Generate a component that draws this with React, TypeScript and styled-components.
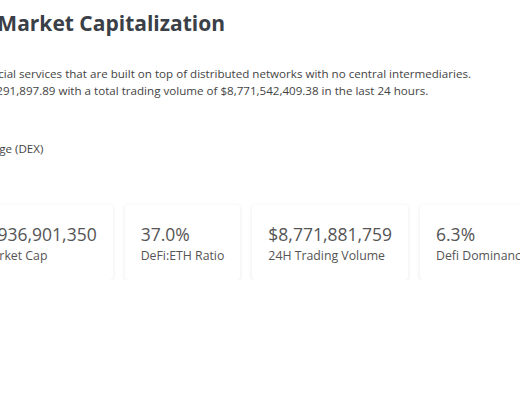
import styled, { createGlobalStyle } from "styled-components";

const GlobalStyle = createGlobalStyle`
  html, body {
    margin: 0;
    padding: 0;
    background: #ffffff;
    overflow: hidden;
  }
  body {
    font-family: "Open Sans", "Noto Sans", "Liberation Sans", sans-serif;
  }
`;

const stats = [
  { value: "$191,936,901,350", label: "DeFi Market Cap" },
  { value: "37.0%", label: "DeFi:ETH Ratio" },
  { value: "$8,771,881,759", label: "24H Trading Volume" },
  { value: "6.3%", label: "Defi Dominance" },
  { value: "Uniswap", label: "Top Coin" },
];

export default function App() {
  return (
    <>
      <GlobalStyle />
      <Page>
        <Title>DeFi Market Capitalization</Title>
        <Intro>
          <Line>
            (DeFi) financial services that are built on top of distributed networks with no central
            intermediaries.
          </Line>
          <Line>
            at $91,936,291,897.89 with a total trading volume of $8,771,542,409.38 in the last 24
            hours.
          </Line>
        </Intro>
        <Filter>Top Exchange (DEX)</Filter>
        <Cards>
          {stats.map((s) => (
            <Card key={s.label}>
              <Value>{s.value}</Value>
              <Label>{s.label}</Label>
            </Card>
          ))}
        </Cards>
      </Page>
    </>
  );
}

const Page = styled.main`
  display: flex;
  flex-direction: column;
  width: 1100px;
  margin-left: -63px;
  padding-top: 10px;
`;

const Title = styled.h1`
  margin: 0;
  padding-left: 9px;
  font-size: 21px;
  line-height: 26px;
  font-weight: 700;
  color: #3b3f47;
  white-space: nowrap;
`;

const Intro = styled.div`
  display: flex;
  flex-direction: column;
  margin-top: 29px;
`;

const Line = styled.p`
  margin: 0;
  font-size: 11.6px;
  line-height: 17px;
  color: #444444;
  white-space: nowrap;
`;

const Filter = styled.div`
  margin-top: 41px;
  font-size: 11.6px;
  line-height: 17px;
  color: #444444;
`;

const Cards = styled.div`
  display: flex;
  gap: 12px;
  margin-top: 48px;
  align-items: flex-start;
`;

const Card = styled.div`
  display: flex;
  flex-direction: column;
  padding: 16px 16px 15px;
  background: #ffffff;
  border-radius: 4px;
  box-shadow: 0 1px 4px rgba(0, 0, 0, 0.09);
`;

const Value = styled.div`
  font-size: 17.5px;
  line-height: 26px;
  color: #555555;
  white-space: nowrap;
`;

const Label = styled.div`
  font-size: 12.3px;
  line-height: 18px;
  color: #555555;
  white-space: nowrap;
`;
